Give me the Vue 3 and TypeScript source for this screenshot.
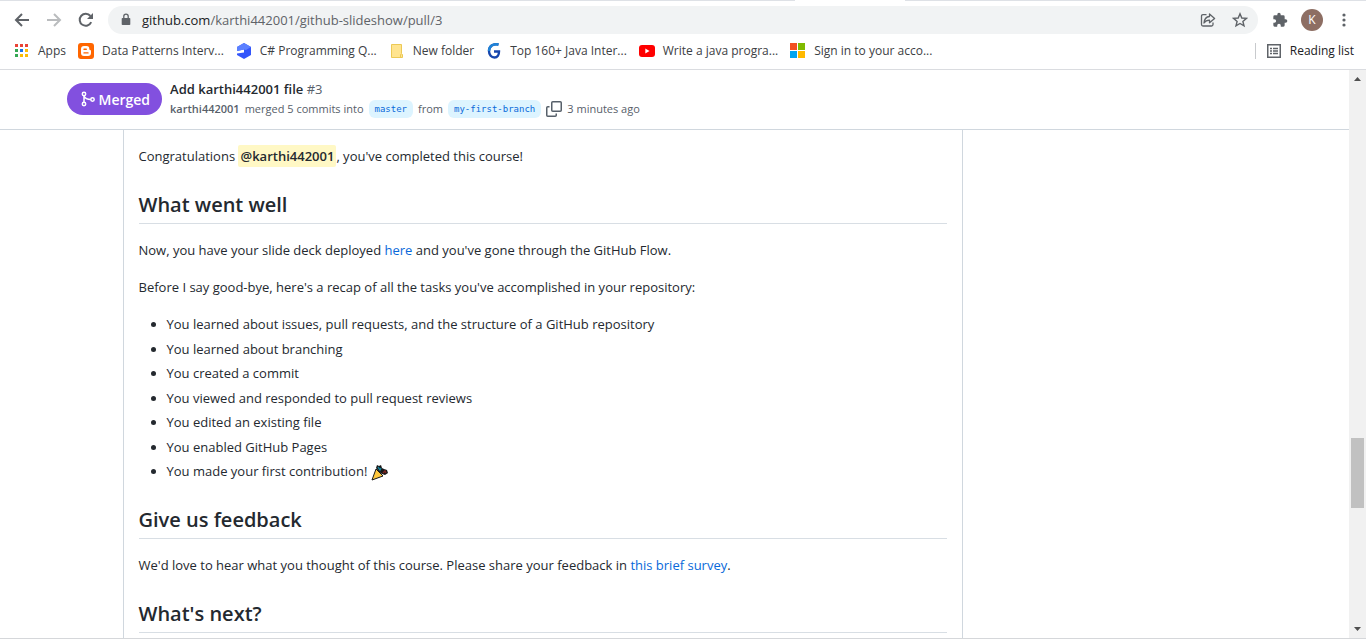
<script setup lang="ts">
type Bookmark = { label: string; icon: string; href: string }

const bookmarks: Bookmark[] = [
  { label: 'Apps', icon: 'apps', href: '#apps' },
  { label: 'Data Patterns Interv...', icon: 'blogger', href: '#data-patterns' },
  { label: 'C# Programming Q...', icon: 'hexagon', href: '#csharp' },
  { label: 'New folder', icon: 'folder', href: '#folder' },
  { label: 'Top 160+ Java Inter...', icon: 'g', href: '#java' },
  { label: 'Write a java progra...', icon: 'youtube', href: '#video' },
  { label: 'Sign in to your acco...', icon: 'microsoft', href: '#sign-in' },
]

const appColors: string[] = [
  '#ea4335', '#ea4335', '#ea4335',
  '#34a853', '#1a73e8', '#fbbc04',
  '#34a853', '#fbbc04', '#fbbc04',
]

const tasks: string[] = [
  'You learned about issues, pull requests, and the structure of a GitHub repository',
  'You learned about branching',
  'You created a commit',
  'You viewed and responded to pull request reviews',
  'You edited an existing file',
  'You enabled GitHub Pages',
  'You made your first contribution!',
]
</script>

<template>
  <div class="window">
    <div class="tab-edge"><span class="tab-line before"></span><span class="tab-line after"></span></div>

    <header class="toolbar">
      <nav class="history" aria-label="History">
        <button class="icon-button" aria-label="Back">
          <svg width="16" height="16" viewBox="0 0 16 16"><path d="M15 8H2M8 2 2 8l6 6" fill="none" stroke="#5f6368" stroke-width="2" /></svg>
        </button>
        <button class="icon-button" aria-label="Forward" disabled>
          <svg width="16" height="16" viewBox="0 0 16 16"><path d="M1 8h13M8 2l6 6-6 6" fill="none" stroke="#babcbe" stroke-width="2" /></svg>
        </button>
        <button class="icon-button" aria-label="Reload">
          <svg width="16" height="16" viewBox="0 0 16 16"><path d="M13.2 10.2A6 6 0 1 1 12.4 4" fill="none" stroke="#5f6368" stroke-width="2" /><path d="M15 1v6H9z" fill="#5f6368" /></svg>
        </button>
      </nav>
      <div class="omnibox">
        <svg class="lock" width="10" height="14" viewBox="0 0 10 14"><path d="M1.500 5h7q.8 0 .8.800v5.400q0 .8-.8.800h-7q-.8 0-.8-.800V5.800q0-.8.8-.800z" fill="#5f6368" /><path d="M2.800 6V3.300a2.200 2.200 0 0 1 4.400 0V6" fill="none" stroke="#5f6368" stroke-width="1.300" /></svg>
        <a class="url" href="#address"><span class="host">github.com</span>/karthi442001/github-slideshow/pull/3</a>
        <button class="icon-button share" aria-label="Share">
          <svg width="16" height="16" viewBox="0 0 16 16" fill="none" stroke="#5f6368" stroke-width="1.300"><path d="M6.500 2.700H3q-1.500 0-1.500 1.500V12.500q0 1.500 1.500 1.500h8.500q1.500 0 1.500-1.500V10.500" /><path d="M9.500 2v2.500C6 4.800 4.300 7.200 4 11c1.300-2 3-2.800 5.500-2.800v2.600L14.600 6.400z" stroke-linejoin="round" /></svg>
        </button>
        <button class="icon-button" aria-label="Bookmark this tab">
          <svg width="16" height="16" viewBox="0 0 16 16"><path d="m8 1.800 1.800 4.200 4.600.4-3.500 3 1.100 4.500L8 11.500l-4 2.400 1.100-4.500-3.500-3 4.600-.4z" fill="none" stroke="#5f6368" stroke-width="1.400" /></svg>
        </button>
      </div>
      <div class="extras">
        <button class="icon-button" aria-label="Extensions">
          <svg width="16" height="16" viewBox="0 0 24 24"><path d="M20.500 11H19V7a2 2 0 0 0-2-2h-4V3.500a2.500 2.500 0 0 0-5 0V5H4a2 2 0 0 0-2 2v3.800h1.500a2.700 2.700 0 0 1 0 5.400H2V20a2 2 0 0 0 2 2h3.800v-1.500a2.700 2.700 0 0 1 5.400 0V22H17a2 2 0 0 0 2-2v-4h1.500a2.500 2.500 0 0 0 0-5z" fill="#5f6368" /></svg>
        </button>
        <button class="avatar" aria-label="Profile">K</button>
        <button class="icon-button" aria-label="Menu">
          <svg width="16" height="16" viewBox="0 0 16 16" fill="#5f6368"><circle cx="8" cy="3" r="1.600" /><circle cx="8" cy="8" r="1.600" /><circle cx="8" cy="13" r="1.600" /></svg>
        </button>
      </div>
    </header>

    <nav class="bookmarks" aria-label="Bookmarks">
      <a v-for="item in bookmarks" :key="item.label" class="bookmark" :href="item.href">
        <svg v-if="item.icon === 'apps'" width="16" height="16" viewBox="0 0 16 16">
          <rect v-for="(color, i) in appColors" :key="i" :x="1 + (i % 3) * 5" :y="1 + Math.floor(i / 3) * 5" width="3" height="3" :fill="color" />
        </svg>
        <svg v-else-if="item.icon === 'blogger'" width="16" height="16" viewBox="0 0 16 16"><rect width="16" height="16" rx="3" fill="#ff6600" /><path d="M6 3h2.500A2.800 2.800 0 0 1 11.300 6q0 1 .8 1 .9 0 .9.900V10a3 3 0 0 1-3 3H6a3 3 0 0 1-3-3V6a3 3 0 0 1 3-3z" fill="#fff" /><path d="M6 6.200h2.300M6 9.900h4" stroke="#ff6600" stroke-width="1.400" stroke-linecap="round" /></svg>
        <svg v-else-if="item.icon === 'hexagon'" width="16" height="16" viewBox="0 0 16 16"><path d="m8 0 7 4v8l-7 4-7-4v-1.500l7-1V6.500L1 8V4z" fill="#3355fb" /><path d="m8 0 7 4-5 3-2-.5L1 8V4z" fill="#5b80ff" /></svg>
        <svg v-else-if="item.icon === 'folder'" width="16" height="16" viewBox="0 0 16 16"><path d="M2.500 1.500h10v9l1 1v3h-11z" fill="#ffe48f" stroke="#ecc955" /><path d="M11.500 14.500v-3h1" fill="none" stroke="#ecc955" /></svg>
        <svg v-else-if="item.icon === 'g'" width="16" height="16" viewBox="0 0 16 16"><path d="M12.500 1.500C7 .2 3 3.500 3 8c0 4 2.500 6.500 5.500 6.500S13 12 13 8.500H8" fill="none" stroke="#1746ad" stroke-width="2.400" /><path d="M12.500 1.500C7 .2 3 3.500 3 8" fill="none" stroke="#1f83d7" stroke-width="2.400" /></svg>
        <svg v-else-if="item.icon === 'youtube'" width="16" height="16" viewBox="0 0 16 16"><rect y="2" width="16" height="12" rx="3" fill="#f00" /><path d="m6.300 5.500 4.200 2.500-4.200 2.500z" fill="#fff" /></svg>
        <svg v-else width="16" height="16" viewBox="0 0 16 16"><path d="M0 0h7v7H0z" fill="#f25022" /><path d="M8 0h7v7H8z" fill="#7fba00" /><path d="M0 8h7v7H0z" fill="#00a4ef" /><path d="M8 8h7v7H8z" fill="#ffb900" /></svg>
        <span>{{ item.label }}</span>
      </a>
      <button class="reading">
        <svg width="14" height="14" viewBox="0 0 14 14" fill="none" stroke="#5f6368"><rect x=".75" y=".75" width="12.500" height="12.500" stroke-width="1.500" /><path d="M3 4.500h2M6 4.500h5M3 7h2M6 7h5M3 9.500h2M6 9.500h5" stroke-width="1.300" /></svg>
        <span>Reading list</span>
      </button>
    </nav>

    <div class="viewport">
      <main class="page">
        <section class="summary">
          <div class="container summary-row">
            <span class="state">
              <svg width="16" height="16" viewBox="0 0 16 16" fill="none" stroke="#fff" stroke-width="1.500"><circle cx="4" cy="3" r="1.700" /><circle cx="4" cy="13" r="1.700" /><circle cx="12.500" cy="8.500" r="1.700" /><path d="M4 4.700v6.600M4 5c1 2.300 3 3.500 6.800 3.500" /></svg>
              Merged
            </span>
            <div class="details">
              <h1><a href="#title">Add karthi442001 file</a> <span class="number">#3</span></h1>
              <div class="meta">
                <a class="author" href="#author">karthi442001</a>
                <span>merged 5 commits into</span>
                <a class="branch" href="#master">master</a>
                <span>from</span>
                <a class="branch" href="#branch">my-first-branch</a>
                <button class="copy" aria-label="Copy branch name">
                  <svg width="16" height="16" viewBox="0 0 16 16" fill="none" stroke="#57606a" stroke-width="1.500"><rect x="5.750" y=".75" width="9.500" height="9.500" rx="1" /><path d="M3.500 5.750H1.750q-1 0-1 1v7.500q0 1 1 1h7.500q1 0 1-1V12.500" /></svg>
                </button>
                <span>3 minutes ago</span>
              </div>
            </div>
          </div>
        </section>

        <div class="container discussion">
          <article class="comment">
            <p>Congratulations <a class="mention" href="#mention">@karthi442001</a>, you've completed this course!</p>
            <h2>What went well</h2>
            <p>Now, you have your slide deck deployed <a class="link" href="#here">here</a> and you've gone through the GitHub Flow.</p>
            <p>Before I say good-bye, here's a recap of all the tasks you've accomplished in your repository:</p>
            <ul>
              <li v-for="(task, i) in tasks" :key="task">
                {{ task }}
                <svg v-if="i === tasks.length - 1" class="party" width="18" height="17" viewBox="0 0 18 17"><path d="m5 5 7 7-11 4z" fill="#ffc83d" stroke="#171717" stroke-linejoin="round" /><path d="m5 4 1-3 2 1 2-1 1 3 2 1 3 1 1 3-3 2-3-1-3-2z" fill="#171717" /><path d="m7 3 2 3 1-2" fill="none" stroke="#16809a" stroke-width="1.500" /><path d="m12 9 2-2 1 2" fill="none" stroke="#7d2521" stroke-width="1.500" /></svg>
              </li>
            </ul>
            <h2>Give us feedback</h2>
            <p>We'd love to hear what you thought of this course. Please share your feedback in <a class="link" href="#survey">this brief survey</a>.</p>
            <h2>What's next?</h2>
          </article>
        </div>
      </main>
      <div class="scrollbar" aria-hidden="true">
        <svg width="17" height="17" viewBox="0 0 17 17"><path d="m5 11 3.500-4 3.500 4z" fill="#505050" /></svg>
        <div class="track"><div class="thumb"></div></div>
        <svg width="17" height="17" viewBox="0 0 17 17"><path d="m5 6 3.500 4L12 6z" fill="#505050" /></svg>
      </div>
    </div>
    <footer class="bottom-edge"></footer>
  </div>
</template>

<style>
body {
  margin: 0;
}
</style>

<style scoped>
* {
  box-sizing: border-box;
}
.window {
  display: flex;
  flex-direction: column;
  height: 100vh;
  background: #fff;
  color: #24292f;
  font-family: "Open Sans", "Noto Sans", sans-serif;
  font-size: 13px;
  overflow: hidden;
}
a {
  color: inherit;
  text-decoration: none;
}
button {
  padding: 0;
  border: 0;
  background: none;
  color: inherit;
  font: inherit;
}
svg {
  display: block;
  flex: none;
}
.tab-edge {
  display: flex;
  flex: none;
  gap: 110px;
  height: 1px;
}
.tab-line {
  background: #dee1e6;
}
.before {
  flex: 1;
}
.after {
  width: 461px;
}
.toolbar {
  display: flex;
  flex: none;
  align-items: center;
  height: 37px;
  padding: 0 14px;
}
.history {
  display: flex;
  gap: 16px;
}
.icon-button {
  display: block;
  flex: none;
}
.omnibox {
  display: flex;
  flex: 1;
  align-items: center;
  height: 28px;
  margin: 0 14px;
  padding: 0 10px 0 13px;
  border-radius: 14px;
  background: #f1f3f4;
}
.url {
  flex: 1;
  margin-left: 11px;
  color: #5f6368;
}
.host {
  color: #202124;
}
.share {
  margin-right: 16px;
}
.extras {
  display: flex;
  align-items: center;
  gap: 13px;
}
.avatar {
  width: 22px;
  height: 22px;
  border-radius: 50%;
  background: #8d6e63;
  color: #fff;
  font-size: 12px;
  line-height: 22px;
  text-align: center;
}
.bookmarks {
  display: flex;
  flex: none;
  align-items: center;
  height: 32px;
  padding: 0 12px 6px 14px;
  border-bottom: 1px solid #dadce0;
  color: #3c4043;
  font-size: 12px;
  gap: 12px;
}
.bookmark {
  display: flex;
  align-items: center;
  gap: 8px;
  white-space: nowrap;
}
.reading {
  display: flex;
  align-items: center;
  gap: 9px;
  height: 16px;
  margin-left: auto;
  padding-left: 11px;
  border-left: 1px solid #c8cacd;
  color: #202124;
  white-space: nowrap;
}
.viewport {
  display: flex;
  flex: 1;
  min-height: 0;
}
.page {
  display: flex;
  flex: 1;
  flex-direction: column;
  min-width: 0;
  overflow: hidden;
}
.container {
  width: 100%;
  max-width: 1280px;
  margin: 0 auto;
  padding: 0 32px;
}
.summary {
  flex: none;
  height: 60px;
  border-bottom: 1px solid #d0d7de;
}
.summary-row {
  display: flex;
  align-items: center;
  height: 58px;
  gap: 8px;
}
.state {
  display: flex;
  align-items: center;
  height: 32px;
  padding: 0 12px 0 13px;
  border-radius: 16px;
  background: #8250df;
  color: #fff;
  font-size: 14px;
  font-weight: 600;
  gap: 3px;
}
h1 {
  margin: 0;
  font-size: 13px;
  font-weight: 600;
  line-height: 19px;
}
.number {
  color: #57606a;
  font-weight: 400;
}
.meta {
  display: flex;
  align-items: center;
  height: 20px;
  color: #57606a;
  font-size: 11px;
  gap: 5px;
  white-space: nowrap;
}
.author {
  font-weight: 600;
}
.branch {
  padding: 0 6px;
  border-radius: 6px;
  background: #ddf4ff;
  color: #0969da;
  font-family: "DejaVu Sans Mono", monospace;
  font-size: 9px;
  line-height: 18px;
}
.discussion {
  flex: 1;
  padding-right: 352px;
  padding-left: 88px;
}
.comment {
  height: 100%;
  padding: 16px 15px 0;
  border-right: 1px solid #d0d7de;
  border-left: 1px solid #d0d7de;
}
p {
  margin: 0 0 16px;
  line-height: 21px;
}
.mention {
  padding: 2px;
  border-radius: 2px;
  background: #fff8c5;
  font-weight: 600;
}
.link {
  color: #0969da;
}
h2 {
  margin: 24px 0 16px;
  padding-bottom: 5px;
  border-bottom: 1px solid #d8dee4;
  font-size: 20px;
  font-weight: 600;
  line-height: 27px;
}
ul {
  display: flex;
  flex-direction: column;
  justify-content: space-between;
  min-height: 168px;
  margin: 0 0 16px;
  padding-left: 28px;
}
li {
  line-height: 21px;
}
.party {
  display: inline-block;
  vertical-align: middle;
}
.scrollbar {
  display: flex;
  flex: none;
  flex-direction: column;
  width: 17px;
  background: #f1f1f1;
}
.track {
  display: flex;
  flex: 1;
  flex-direction: column;
  justify-content: flex-end;
  padding: 0 2px 113px;
}
.thumb {
  height: 70px;
  background: #c1c1c1;
}
.bottom-edge {
  flex: none;
  height: 4px;
  border-top: 1px solid #d5d7da;
}
</style>
